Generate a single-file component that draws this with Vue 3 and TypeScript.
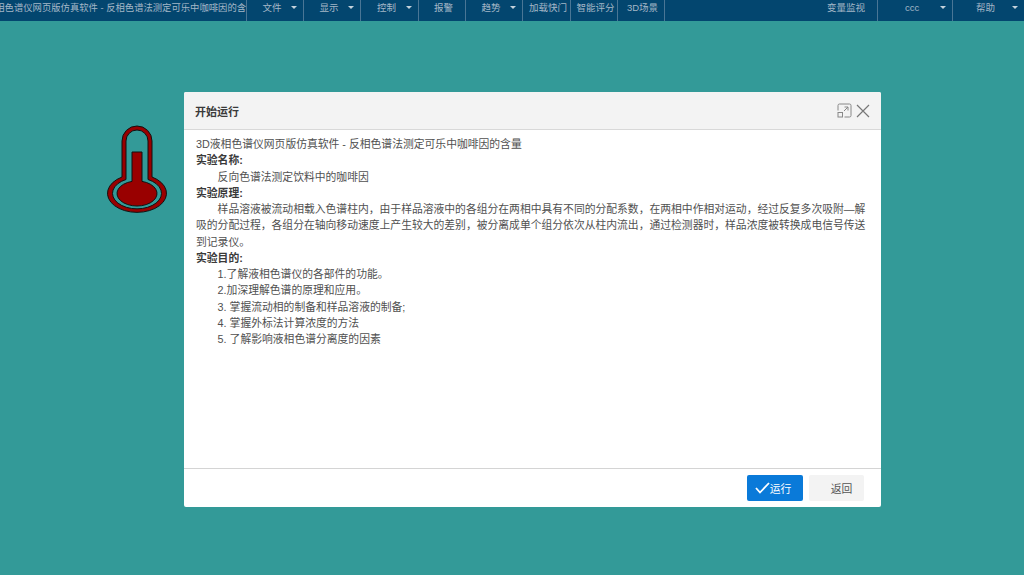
<script setup lang="ts">
const menus = [
  { label: '文件', w: 57, caret: true },
  { label: '显示', w: 57, caret: true },
  { label: '控制', w: 58, caret: true },
  { label: '报警', w: 47, caret: false },
  { label: '趋势', w: 57, caret: true },
  { label: '加载快门', w: 48, caret: false },
  { label: '智能评分', w: 47, caret: false },
  { label: '3D场景', w: 47, caret: false },
]
const aims = [
  '1.了解液相色谱仪的各部件的功能。',
  '2.加深理解色谱的原理和应用。',
  '3. 掌握流动相的制备和样品溶液的制备;',
  '4. 掌握外标法计算浓度的方法',
  '5. 了解影响液相色谱分离度的因素',
]
</script>

<template>
  <div class="page">
    <div class="topbar">
      <div class="title"><span>3D液相色谱仪网页版仿真软件 - 反相色谱法测定可乐中咖啡因的含量</span></div>
      <div
        v-for="m in menus"
        :key="m.label"
        class="menu"
        :class="{ drop: m.caret }"
        :style="{ width: m.w + 'px' }"
      >
        {{ m.label }}<i v-if="m.caret" class="caret"></i>
      </div>
      <div class="spacer">变量监视</div>
      <div class="menu drop user">ccc<i class="caret"></i></div>
      <div class="menu drop help">帮助<i class="caret"></i></div>
    </div>

    <svg class="thermo" width="62" height="90" viewBox="0 0 62 90" stroke="#111" stroke-width="1">
      <path d="M16 16 A15 15 0 0 1 46 16 V52 A29.5 19 0 1 1 16 52 Z" fill="#990000" />
      <path d="M20 16 A11 11 0 0 1 42 16 V54.5 A24.5 15.5 0 1 1 20 54.5 Z" fill="#339a98" />
      <path d="M26 27 H36 V56.4 A20 12.5 0 1 1 26 56.4 Z" fill="#990000" />
    </svg>

    <div class="dialog">
      <header class="dlg-head">
        <span class="dlg-title">开始运行</span>
        <svg class="ic-max" width="15" height="15" viewBox="0 0 15 15" fill="none" stroke="#888" stroke-width="1">
          <path d="M1 7.5 V2.5 Q1 1 2.5 1 H12.5 Q14 1 14 2.5 V12.5 Q14 14 12.5 14 H7.5" />
          <rect x="1" y="9.5" width="4.5" height="4.5" />
          <path d="M7 8 L11 4 M7.5 4 H11 V7.5" />
        </svg>
        <svg class="ic-close" width="14" height="14" viewBox="0 0 14 14" fill="none" stroke="#777" stroke-width="1.2">
          <path d="M1 1 L13 13 M13 1 L1 13" />
        </svg>
      </header>
      <div class="dlg-body">
        <p>3D液相色谱仪网页版仿真软件 - 反相色谱法测定可乐中咖啡因的含量</p>
        <p class="b">实验名称:</p>
        <p class="in">反向色谱法测定饮料中的咖啡因</p>
        <p class="b">实验原理:</p>
        <p class="first">样品溶液被流动相载入色谱柱内，由于样品溶液中的各组分在两相中具有不同的分配系数，在两相中作相对运动，经过反复多次吸附—解吸的分配过程，各组分在轴向移动速度上产生较大的差别，被分离成单个组分依次从柱内流出，通过检测器时，样品浓度被转换成电信号传送到记录仪。</p>
        <p class="b">实验目的:</p>
        <p v-for="a in aims" :key="a" class="in">{{ a }}</p>
      </div>
      <footer class="dlg-foot">
        <button class="btn run">
          <svg width="15" height="12" viewBox="0 0 15 12" fill="none" stroke="#fff" stroke-width="1.8">
            <path d="M1 6 L5 10.5 L14 1" />
          </svg>运行
        </button>
        <button class="btn back">返回</button>
      </footer>
    </div>
  </div>
</template>

<style scoped>
.page {
  position: relative;
  width: 1024px;
  height: 575px;
  overflow: hidden;
  background: #339a98;
  font-family: "Liberation Sans", "Noto Sans CJK SC", sans-serif;
}

.topbar {
  display: flex;
  height: 21px;
  background: #03466f;
  color: #a3b7c7;
  font-size: 9.5px;
  line-height: 16px;
}

.title {
  width: 246px;
  flex-shrink: 0;
  overflow: hidden;
  white-space: nowrap;
  font-size: 9.33px;
}

.title span {
  display: block;
  margin-left: -26px;
}

.menu {
  position: relative;
  flex-shrink: 0;
  box-sizing: border-box;
  padding-left: 3px;
  border-left: 1px solid #4a7695;
  text-align: center;
  white-space: nowrap;
}

.menu.drop {
  padding-left: 0;
  padding-right: 6px;
}

.caret {
  position: absolute;
  top: 6px;
  right: 6px;
  border: 3px solid transparent;
  border-top-color: #c4d2dc;
  border-bottom: none;
}

.spacer {
  width: 213px;
  flex-shrink: 0;
  box-sizing: border-box;
  border-left: 1px solid #4a7695;
  padding-right: 12px;
  text-align: right;
}

.user {
  width: 75px;
}

.help {
  width: 72px;
}

.thermo {
  position: absolute;
  left: 106px;
  top: 125px;
}

.dialog {
  position: absolute;
  left: 184px;
  top: 92px;
  display: flex;
  flex-direction: column;
  box-sizing: border-box;
  width: 697px;
  height: 415px;
  background: #fff;
  border-radius: 2px;
}

.dlg-head {
  display: flex;
  align-items: center;
  box-sizing: border-box;
  height: 38px;
  padding: 0 11px;
  background: #f3f3f3;
  border-bottom: 1px solid #d8d8d8;
  border-radius: 2px 2px 0 0;
}

.dlg-title {
  flex: 1;
  font-size: 11px;
  font-weight: 700;
  color: #3a3a3a;
}

.ic-close {
  margin-left: 4px;
}

.dlg-body {
  flex: 1;
  padding: 6px 12px 0;
  font-size: 10.8px;
  line-height: 16.25px;
  color: #505050;
}

.dlg-body p {
  margin: 0;
}

.b {
  font-weight: 700;
  color: #3a3a3a;
}

.in {
  padding-left: 21.6px;
}

.first {
  text-indent: 21.6px;
}

.dlg-foot {
  display: flex;
  justify-content: flex-end;
  align-items: center;
  gap: 6px;
  box-sizing: border-box;
  height: 39px;
  padding: 0 17px 0 0;
  border-top: 1px solid #d4d4d4;
}

.btn {
  display: flex;
  align-items: center;
  justify-content: center;
  height: 26px;
  padding: 0;
  border: none;
  border-radius: 2px;
  font-family: inherit;
  font-size: 10.8px;
}

.run {
  width: 56px;
  padding-right: 4px;
  background: #0a7ad9;
  color: #fff;
}

.back {
  width: 55px;
  padding-left: 10px;
  background: #f3f3f3;
  color: #555;
}
</style>
